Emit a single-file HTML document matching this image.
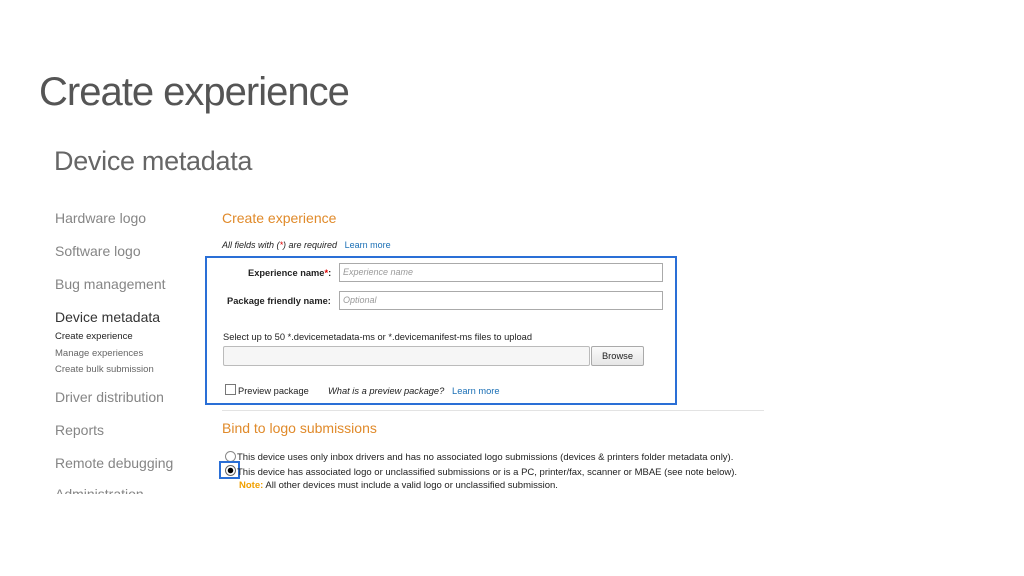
<!DOCTYPE html>
<html><head><meta charset="utf-8"><style>
body{margin:0;width:1024px;height:576px;background:#fff;position:relative;overflow:hidden;font-family:"Liberation Sans",sans-serif;}
.a{position:absolute;white-space:nowrap;}
.nav{color:#858585;font-size:14px;left:55px}
.sub{color:#666;font-size:9.5px;left:55px}
.s{font-size:9.3px;color:#222}
.lnk{color:#1a6fb5}
.inp{position:absolute;border:1px solid #aaa;background:#fff;font-size:9px;font-style:italic;color:#999;line-height:17px;padding-left:3px;box-sizing:border-box;height:19px}
</style></head><body>
<div class="a" style="left:39px;top:70px;font-size:40px;color:#555;letter-spacing:-1px">Create experience</div>
<div class="a" style="left:54px;top:146px;font-size:27px;color:#666;letter-spacing:-0.3px">Device metadata</div>

<div class="a nav" style="top:210px">Hardware logo</div>
<div class="a nav" style="top:243px">Software logo</div>
<div class="a nav" style="top:276px">Bug management</div>
<div class="a nav" style="top:309px;color:#333">Device metadata</div>
<div class="a sub" style="top:331px;color:#222">Create experience</div>
<div class="a sub" style="top:348px">Manage experiences</div>
<div class="a sub" style="top:364px">Create bulk submission</div>
<div class="a nav" style="top:389px">Driver distribution</div>
<div class="a nav" style="top:422px">Reports</div>
<div class="a nav" style="top:455px">Remote debugging</div>
<div class="a" style="left:55px;top:486px;width:120px;height:8px;overflow:hidden"><div class="nav" style="position:absolute;left:0;top:0;font-size:14px;color:#858585">Administration</div></div>

<div class="a" style="left:222px;top:210px;font-size:14px;color:#e08a2a">Create experience</div>
<div class="a s" style="left:222px;top:240px;font-style:italic;font-size:9px">All fields with (<span style="color:#d00">*</span>) are required &nbsp;&nbsp;<span class="lnk" style="font-style:normal">Learn more</span></div>

<div class="a" style="left:205px;top:256px;width:468px;height:145px;border:2px solid #2a6fd6"></div>
<div class="a s" style="left:248px;top:268px;font-weight:bold">Experience name<span style="color:#d00">*</span>:</div>
<div class="inp" style="left:339px;top:263px;width:324px">Experience name</div>
<div class="a s" style="left:227px;top:296px;font-weight:bold">Package friendly name:</div>
<div class="inp" style="left:339px;top:291px;width:324px">Optional</div>
<div class="a s" style="left:223px;top:332px">Select up to 50 *.devicemetadata-ms or *.devicemanifest-ms files to upload</div>
<div class="a" style="left:223px;top:346px;width:365px;height:18px;border:1px solid #bbb;border-radius:2px;background:#f6f6f6"></div>
<div class="a s" style="left:591px;top:346px;width:51px;height:18px;border:1px solid #aaa;border-radius:2px;background:linear-gradient(#fafafa,#e6e6e6);text-align:center;line-height:18px">Browse</div>
<div class="a" style="left:225px;top:384px;width:9px;height:9px;border:1px solid #777;background:#fff"></div>
<div class="a s" style="left:238px;top:386px">Preview package</div>
<div class="a s" style="left:328px;top:386px"><i>What is a preview package?</i> &nbsp;&nbsp;<span class="lnk">Learn more</span></div>

<div class="a" style="left:222px;top:410px;width:542px;height:1px;background:#e3e3e3"></div>
<div class="a" style="left:222px;top:420px;font-size:14px;color:#e08a2a">Bind to logo submissions</div>
<div class="a" style="left:225px;top:451px;width:9px;height:9px;border:1px solid #888;border-radius:50%"></div>
<div class="a s" style="left:237px;top:452px;font-size:9.5px">This device uses only inbox drivers and has no associated logo submissions (devices &amp; printers folder metadata only).</div>
<div class="a" style="left:225px;top:465px;width:9px;height:9px;border:1px solid #666;border-radius:50%;background:radial-gradient(circle,#000 2.5px,#fff 3px)"></div>
<div class="a" style="left:219px;top:461px;width:21px;height:18px;border:2px solid #2a6fd6;box-sizing:border-box"></div>
<div class="a s" style="left:237px;top:467px;font-size:9.5px">This device has associated logo or unclassified submissions or is a PC, printer/fax, scanner or MBAE (see note below).</div>
<div class="a s" style="left:239px;top:480px;font-size:9.5px"><b style="color:#f0a000">Note:</b> All other devices must include a valid logo or unclassified submission.</div>
</body></html>
